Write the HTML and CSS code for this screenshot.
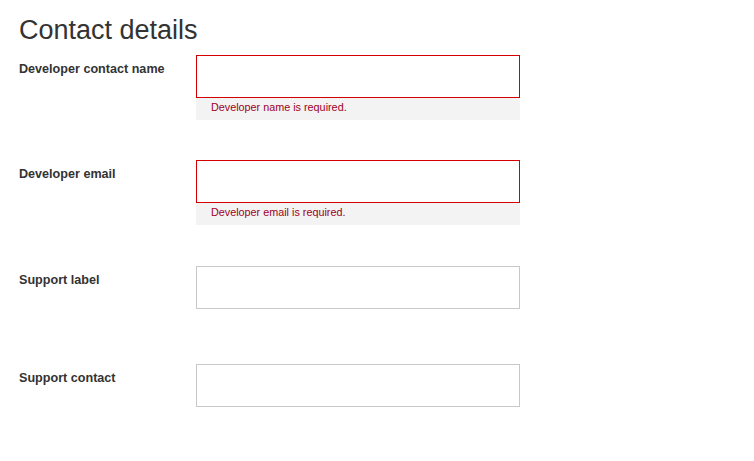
FILE: index.html
```html
<!DOCTYPE html>
<html>
<head>
<meta charset="utf-8">
<link rel="stylesheet" href="styles.css">
</head>
<body>
<div class="page">
  <h1 class="title">Contact details</h1>
  <div class="row has-error">
    <label class="label">Developer contact name</label>
    <div class="field">
      <div class="input invalid"></div>
      <div class="error">Developer name is required.</div>
    </div>
  </div>
  <div class="row has-error">
    <label class="label">Developer email</label>
    <div class="field">
      <div class="input invalid"></div>
      <div class="error">Developer email is required.</div>
    </div>
  </div>
  <div class="row">
    <label class="label">Support label</label>
    <div class="field">
      <div class="input"></div>
    </div>
  </div>
  <div class="row">
    <label class="label">Support contact</label>
    <div class="field">
      <div class="input"></div>
    </div>
  </div>
</div>
</body>
</html>
```
FILE: styles.css
```css
html, body {
  margin: 0;
  padding: 0;
  background: #fff;
}
body {
  font-family: "Liberation Sans", Arial, sans-serif;
  color: #333;
}
.page {
  padding: 14px 0 0 19px;
}
.title {
  margin: 0 0 9px 0;
  font-size: 27px;
  font-weight: normal;
  line-height: 32px;
  color: #333;
}
.row {
  display: flex;
  align-items: flex-start;
  margin-bottom: 55px;
}
.row.has-error {
  margin-bottom: 40px;
}
.row.has-error + .row:not(.has-error) {
  padding-top: 1px;
}
.label {
  width: 177px;
  flex: none;
  font-size: 12.6px;
  font-weight: bold;
  line-height: 16px;
  padding-top: 6px;
  color: #333;
}
.field {
  width: 324px;
}
.input {
  height: 41px;
  border: 1px solid #c8c8c8;
  background: #fff;
}
.input.invalid {
  border-color: #d40000;
}
.error {
  background: #f3f3f3;
  height: 22px;
  box-sizing: border-box;
  padding: 3px 0 0 15px;
  font-size: 10.8px;
  line-height: 13px;
  color: #a0001e;
}
```
